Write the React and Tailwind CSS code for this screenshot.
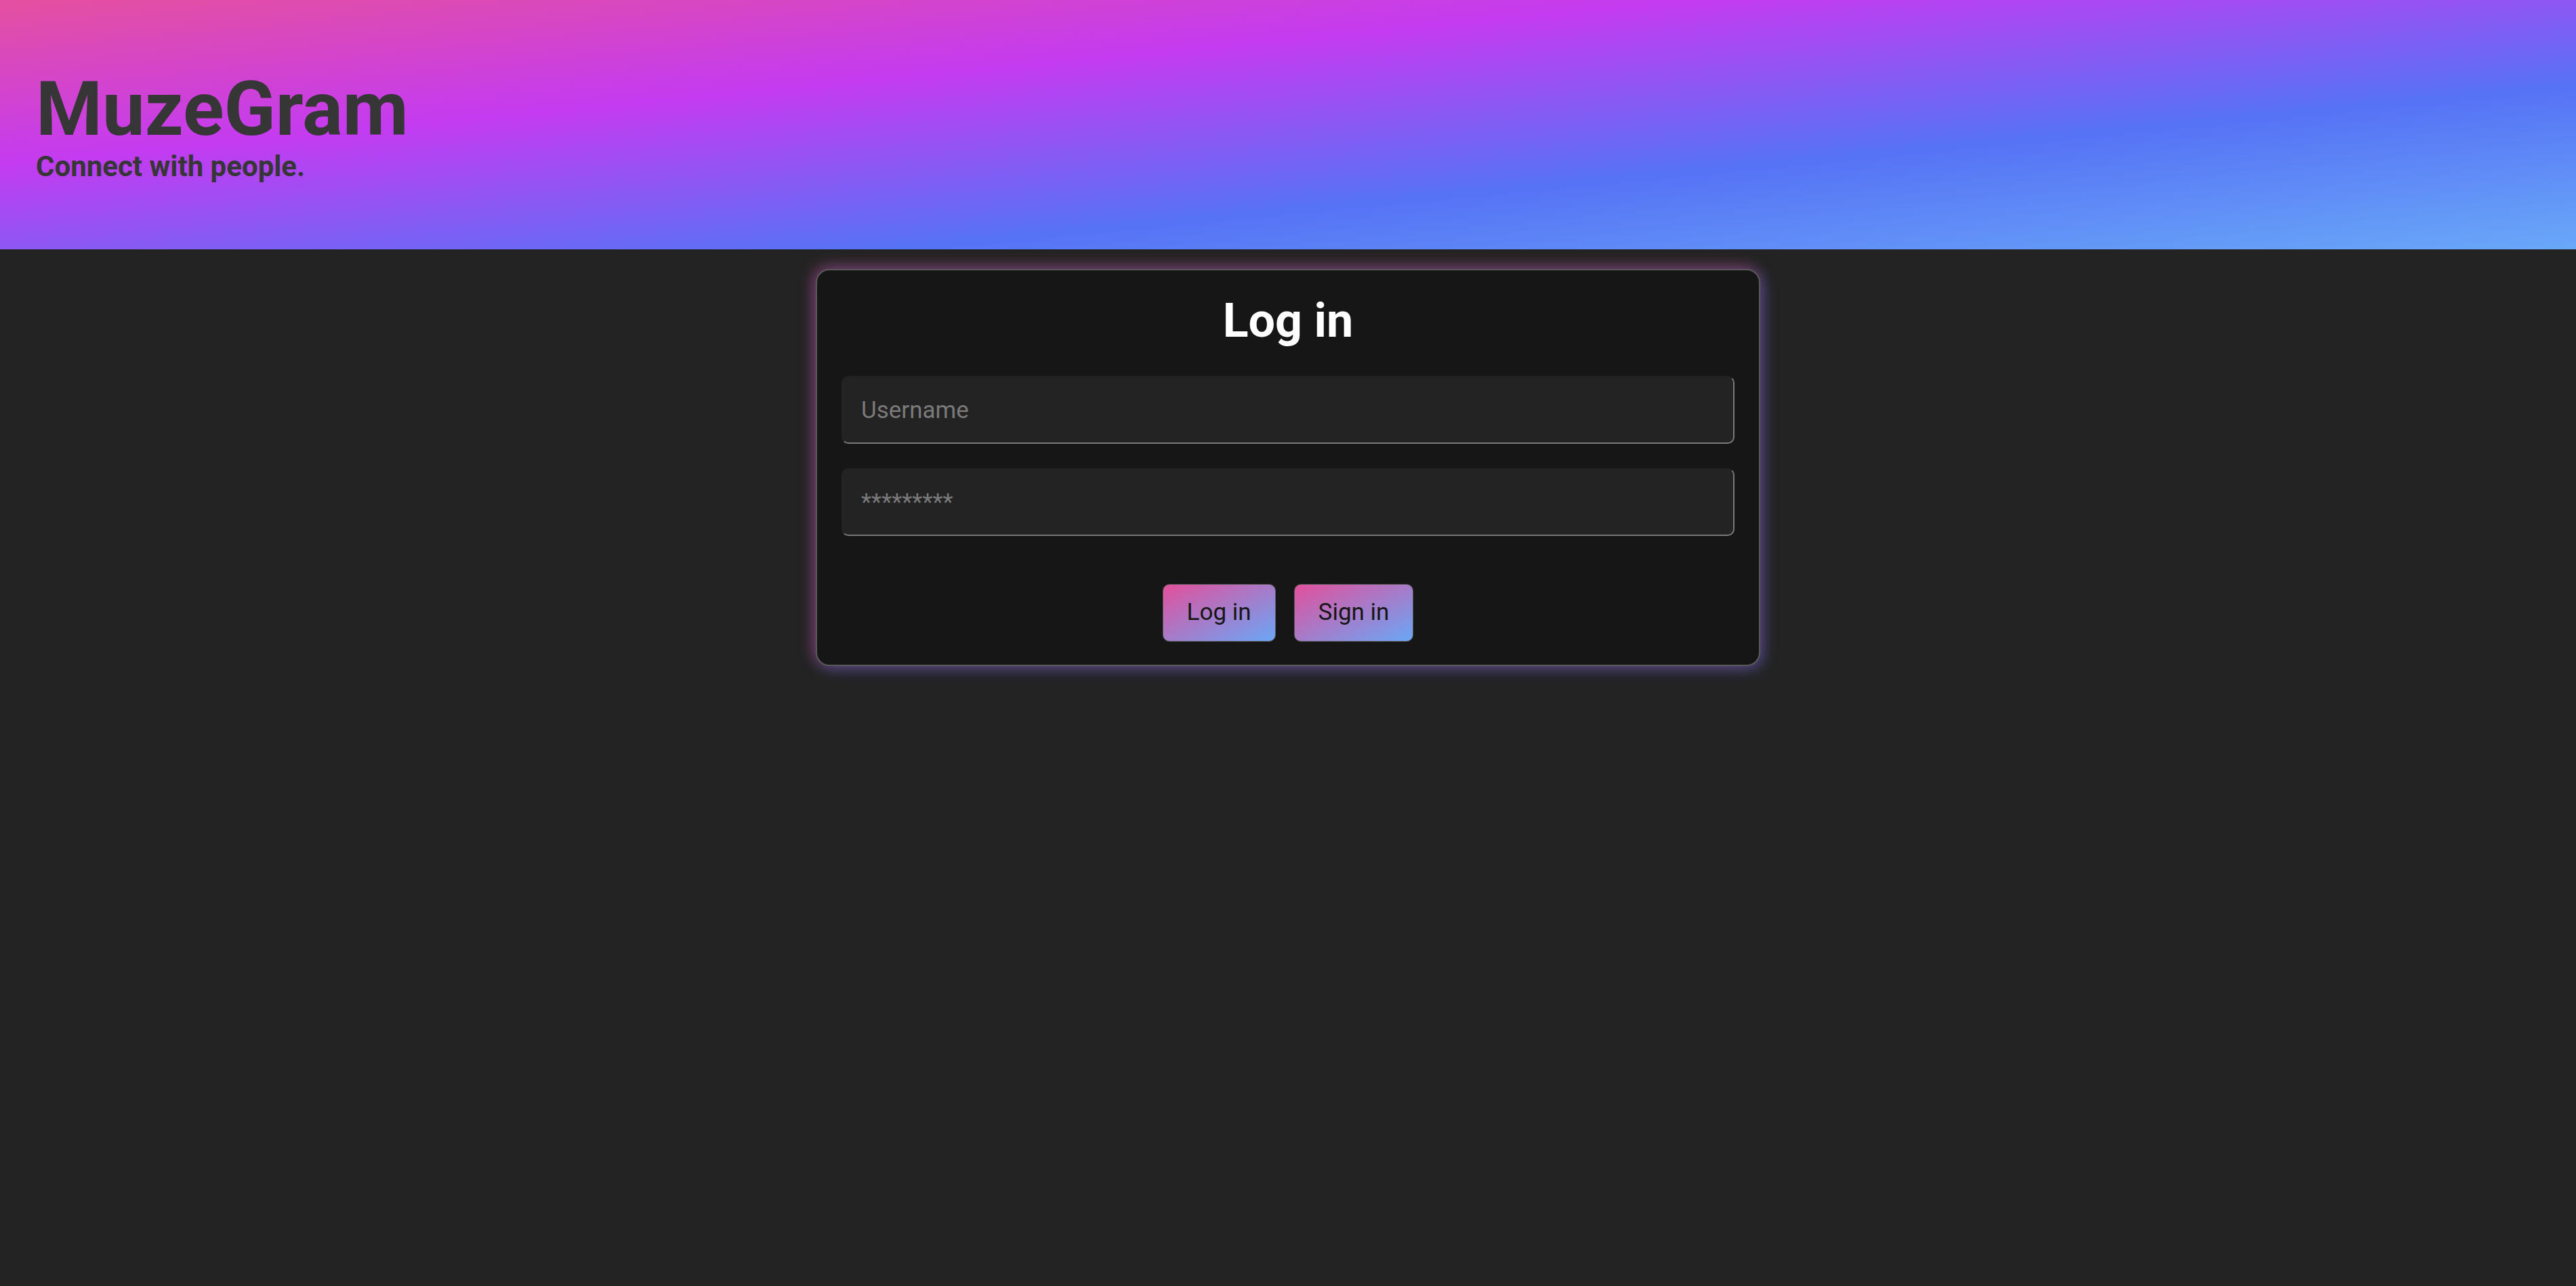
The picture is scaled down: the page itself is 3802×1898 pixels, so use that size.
import React from "react";

const Header = () => {
  return (
    <header className="h-[368px] pl-[53px] pt-[105px] bg-[linear-gradient(to_bottom_right,#e5509f_0%,#c43bf1_33%,#5672f5_67%,#69a8f8_100%)]">
      <h1 className="text-[112px] leading-none font-bold text-[#363636]">MuzeGram</h1>
      <p className="mt-[8px] text-[42px] leading-none font-bold text-[#363636]">
        Connect with people.
      </p>
    </header>
  );
};

const Field = ({ type = "text", placeholder, className = "" }) => {
  return (
    <input
      type={type}
      placeholder={placeholder}
      className={`w-full h-[100px] rounded-[10px] bg-[#232323] border-2 border-t-[#232323] border-l-[#232323] border-r-[#7a7a7a] border-b-[#7a7a7a] pl-[27px] text-[35px] text-[#e5e5e5] placeholder:text-[#7a7a7a] outline-none ${className}`}
    />
  );
};

const GradientButton = ({ children }) => {
  return (
    <button className="h-[85px] px-[35px] rounded-[10px] border border-[#5c5c5c] bg-[linear-gradient(to_bottom_right,#e2509c,#6aa7f6)] text-[35px] text-[#161616]">
      {children}
    </button>
  );
};

const LoginCard = () => {
  return (
    <div className="w-[1394px] mx-auto mt-[29px] flex flex-col rounded-[20px] border-2 border-[#595959] bg-[#161616] px-[36px] pt-[33px] pb-[34px] shadow-[-4px_-4px_22px_rgba(229,80,159,0.4),4px_4px_22px_rgba(96,120,245,0.45)]">
      <h2 className="text-center text-[70px] leading-[82px] font-bold text-white">Log in</h2>
      <Field className="mt-[41px]" placeholder="Username" />
      <Field className="mt-[36px]" type="password" placeholder="*********" />
      <div className="mt-[71px] flex justify-center gap-[27px]">
        <GradientButton>Log in</GradientButton>
        <GradientButton>Sign in</GradientButton>
      </div>
    </div>
  );
};

export default function App() {
  return (
    <div className="min-h-screen bg-[#232323] font-['Roboto',sans-serif]">
      <Header />
      <LoginCard />
    </div>
  );
}
